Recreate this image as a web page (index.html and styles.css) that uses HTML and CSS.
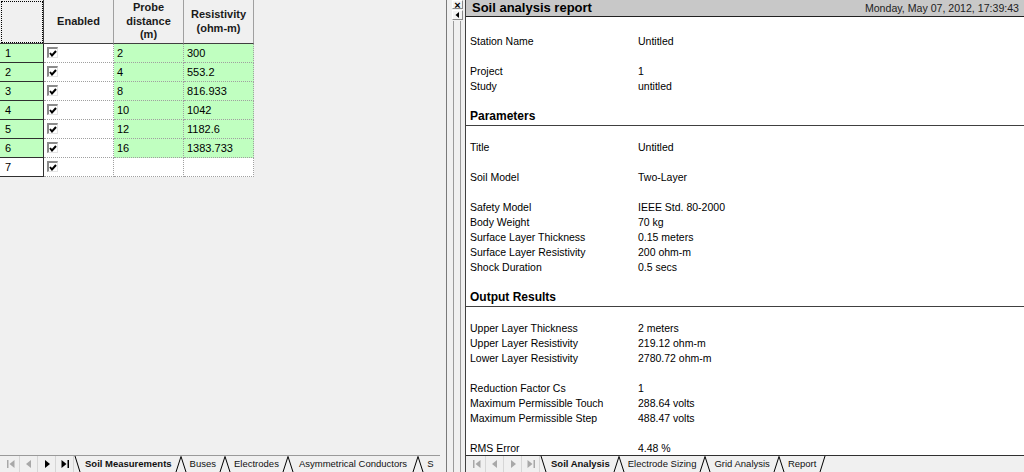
FILE: index.html
```html
<!DOCTYPE html>
<html>
<head>
<meta charset="utf-8">
<link rel="stylesheet" href="styles.css">
</head>
<body>
<div class="app">
  <section class="left">
    <div class="grid-area">
      <div class="grid">
        <div class="hd corner"></div>
        <div class="hd">Enabled</div>
        <div class="hd">Probe<br>distance<br>(m)</div>
        <div class="hd">Resistivity<br>(ohm-m)</div>

        <div class="rh">1</div><div class="en"><span class="cb"><svg width="8" height="7" viewBox="0 0 8 7"><path d="M1 3 L3 5.5 L7 1" fill="none" stroke="#000" stroke-width="2"/></svg></span></div><div class="dc">2</div><div class="dc">300</div>
        <div class="rh">2</div><div class="en"><span class="cb"><svg width="8" height="7" viewBox="0 0 8 7"><path d="M1 3 L3 5.5 L7 1" fill="none" stroke="#000" stroke-width="2"/></svg></span></div><div class="dc">4</div><div class="dc">553.2</div>
        <div class="rh">3</div><div class="en"><span class="cb"><svg width="8" height="7" viewBox="0 0 8 7"><path d="M1 3 L3 5.5 L7 1" fill="none" stroke="#000" stroke-width="2"/></svg></span></div><div class="dc">8</div><div class="dc">816.933</div>
        <div class="rh">4</div><div class="en"><span class="cb"><svg width="8" height="7" viewBox="0 0 8 7"><path d="M1 3 L3 5.5 L7 1" fill="none" stroke="#000" stroke-width="2"/></svg></span></div><div class="dc">10</div><div class="dc">1042</div>
        <div class="rh">5</div><div class="en"><span class="cb"><svg width="8" height="7" viewBox="0 0 8 7"><path d="M1 3 L3 5.5 L7 1" fill="none" stroke="#000" stroke-width="2"/></svg></span></div><div class="dc">12</div><div class="dc">1182.6</div>
        <div class="rh">6</div><div class="en"><span class="cb"><svg width="8" height="7" viewBox="0 0 8 7"><path d="M1 3 L3 5.5 L7 1" fill="none" stroke="#000" stroke-width="2"/></svg></span></div><div class="dc">16</div><div class="dc">1383.733</div>
        <div class="rh blank">7</div><div class="en"><span class="cb"><svg width="8" height="7" viewBox="0 0 8 7"><path d="M1 3 L3 5.5 L7 1" fill="none" stroke="#000" stroke-width="2"/></svg></span></div><div class="dc blank"></div><div class="dc blank"></div>
      </div>
    </div>
    <div class="tabstrip ts-left">
      <div class="nav">
        <span class="nb"><svg width="10" height="10" viewBox="0 0 10 10"><rect x="1" y="1" width="1.5" height="8" fill="#a8a8a8"/><path d="M8.5 1 L8.5 9 L3.5 5 Z" fill="#a8a8a8"/></svg></span>
        <span class="nb"><svg width="10" height="10" viewBox="0 0 10 10"><path d="M7 1 L7 9 L2 5 Z" fill="#a8a8a8"/></svg></span>
        <span class="nb"><svg width="10" height="10" viewBox="0 0 10 10"><path d="M3 1 L3 9 L8 5 Z" fill="#000"/></svg></span>
        <span class="nb"><svg width="10" height="10" viewBox="0 0 10 10"><path d="M1.5 1 L1.5 9 L6.5 5 Z" fill="#000"/><rect x="7.5" y="1" width="1.5" height="8" fill="#000"/></svg></span>
      </div>
      <div class="tabs">
        <svg class="sep" width="8" height="16" viewBox="0 0 8 16"><path d="M1 0 L6 16" fill="none" stroke="#000"/></svg>
        <span class="tab active">Soil Measurements</span>
        <svg class="sep" width="12" height="16" viewBox="0 0 12 16"><path d="M1 16 L6 0.5 L11 16" fill="none" stroke="#000"/></svg>
        <span class="tab">Buses</span>
        <svg class="sep" width="12" height="16" viewBox="0 0 12 16"><path d="M1 16 L6 0.5 L11 16" fill="none" stroke="#000"/></svg>
        <span class="tab">Electrodes</span>
        <svg class="sep" width="12" height="16" viewBox="0 0 12 16"><path d="M1 16 L6 0.5 L11 16" fill="none" stroke="#000"/></svg>
        <span class="tab tab-wide">Asymmetrical Conductors</span>
        <svg class="sep" width="12" height="16" viewBox="0 0 12 16"><path d="M1 16 L6 0.5 L11 16" fill="none" stroke="#000"/></svg>
        <span class="tab">S</span>
      </div>
    </div>
  </section>

  <div class="splitter">
    <div class="sp-gap"></div>
    <div class="sp-bar">
      <div class="sp-btn sp-x">×</div>
      <div class="sp-btn"><svg width="5" height="6" viewBox="0 0 5 6"><path d="M4 0 L4 6 L0.5 3 Z" fill="#000"/></svg></div>
      <div class="sp-lines"></div>
    </div>
  </div>

  <section class="right">
    <header class="rp-head">
      <span class="rp-title">Soil analysis report</span>
      <span class="rp-date">Monday, May 07, 2012, 17:39:43</span>
    </header>
    <div class="rp-body">
      <div class="r"><span class="k">Station Name</span><span>Untitled</span></div>
      <div class="gap"></div>
      <div class="r"><span class="k">Project</span><span>1</span></div>
      <div class="r"><span class="k">Study</span><span>untitled</span></div>
      <div class="h">Parameters</div>
      <div class="r"><span class="k">Title</span><span>Untitled</span></div>
      <div class="gap"></div>
      <div class="r"><span class="k">Soil Model</span><span>Two-Layer</span></div>
      <div class="gap"></div>
      <div class="r"><span class="k">Safety Model</span><span>IEEE Std. 80-2000</span></div>
      <div class="r"><span class="k">Body Weight</span><span>70 kg</span></div>
      <div class="r"><span class="k">Surface Layer Thickness</span><span>0.15 meters</span></div>
      <div class="r"><span class="k">Surface Layer Resistivity</span><span>200 ohm-m</span></div>
      <div class="r"><span class="k">Shock Duration</span><span>0.5 secs</span></div>
      <div class="h">Output Results</div>
      <div class="r"><span class="k">Upper Layer Thickness</span><span>2 meters</span></div>
      <div class="r"><span class="k">Upper Layer Resistivity</span><span>219.12 ohm-m</span></div>
      <div class="r"><span class="k">Lower Layer Resistivity</span><span>2780.72 ohm-m</span></div>
      <div class="gap"></div>
      <div class="r"><span class="k">Reduction Factor Cs</span><span>1</span></div>
      <div class="r"><span class="k">Maximum Permissible Touch</span><span>288.64 volts</span></div>
      <div class="r"><span class="k">Maximum Permissible Step</span><span>488.47 volts</span></div>
      <div class="gap"></div>
      <div class="r"><span class="k">RMS Error</span><span>4.48 %</span></div>
    </div>
    <div class="tabstrip ts-right">
      <div class="nav">
        <span class="nb"><svg width="10" height="10" viewBox="0 0 10 10"><rect x="1" y="1" width="1.5" height="8" fill="#a8a8a8"/><path d="M8.5 1 L8.5 9 L3.5 5 Z" fill="#a8a8a8"/></svg></span>
        <span class="nb"><svg width="10" height="10" viewBox="0 0 10 10"><path d="M7 1 L7 9 L2 5 Z" fill="#a8a8a8"/></svg></span>
        <span class="nb"><svg width="10" height="10" viewBox="0 0 10 10"><path d="M3 1 L3 9 L8 5 Z" fill="#a8a8a8"/></svg></span>
        <span class="nb"><svg width="10" height="10" viewBox="0 0 10 10"><path d="M1.5 1 L1.5 9 L6.5 5 Z" fill="#a8a8a8"/><rect x="7.5" y="1" width="1.5" height="8" fill="#a8a8a8"/></svg></span>
      </div>
      <div class="tabs">
        <svg class="sep" width="8" height="16" viewBox="0 0 8 16"><path d="M1 0 L6 16" fill="none" stroke="#000"/></svg>
        <span class="tab active">Soil Analysis</span>
        <svg class="sep" width="12" height="16" viewBox="0 0 12 16"><path d="M1 16 L6 0.5 L11 16" fill="none" stroke="#000"/></svg>
        <span class="tab">Electrode Sizing</span>
        <svg class="sep" width="12" height="16" viewBox="0 0 12 16"><path d="M1 16 L6 0.5 L11 16" fill="none" stroke="#000"/></svg>
        <span class="tab">Grid Analysis</span>
        <svg class="sep" width="12" height="16" viewBox="0 0 12 16"><path d="M1 16 L6 0.5 L11 16" fill="none" stroke="#000"/></svg>
        <span class="tab">Report</span>
        <svg class="sep" width="8" height="16" viewBox="0 0 8 16"><path d="M1 16 L6 0" fill="none" stroke="#000"/></svg>
      </div>
    </div>
  </section>
</div>
</body>
</html>
```

FILE: styles.css
```css
* { box-sizing: border-box; }
html, body { margin: 0; padding: 0; }
body {
  width: 1024px;
  height: 472px;
  overflow: hidden;
  background: #f0f0f0;
  color: #000;
  font-family: "Liberation Sans", Arial, sans-serif;
}
.app { display: flex; height: 472px; }

/* ---------- left pane ---------- */
.left {
  width: 440px;
  display: flex;
  flex-direction: column;
  background: #f0f0f0;
}
.grid-area { flex: 1; overflow: hidden; }
.grid {
  display: grid;
  grid-template-columns: 44px 70px 70px 70px;
  grid-template-rows: 44px repeat(7, 19px);
  width: 254px;
  font-size: 11px;
}
.hd {
  background: #f0f0f0;
  border-right: 1px solid #a0a0a0;
  border-bottom: 1px solid #404040;
  display: flex;
  align-items: center;
  justify-content: center;
  text-align: center;
  font-weight: bold;
  line-height: 13.5px;
  color: #1a1a1a;
}
.hd.corner {
  border-right-color: #404040;
  outline: 1px dotted #000;
  outline-offset: -2px;
}
.rh {
  background: #c0ffc0;
  border-right: 1px solid #303030;
  border-bottom: 1px solid #303030;
  padding-left: 5px;
  line-height: 18px;
}
.en {
  background: #fff;
  border-right: 1px dotted #a0a0a0;
  border-bottom: 1px dotted #a0a0a0;
}
.dc {
  background: #c0ffc0;
  border-right: 1px dotted #a0a0a0;
  border-bottom: 1px dotted #a0a0a0;
  padding-left: 3px;
  line-height: 18px;
}
.rh.blank, .dc.blank { background: #fff; }
.cb {
  display: flex;
  align-items: center;
  justify-content: center;
  width: 11px;
  height: 11px;
  margin: 3px 0 0 3px;
  background: #fff;
  border-left: 2px solid #8a8a8a;
  border-top: 2px solid #8a8a8a;
  border-right: 1px solid #e4e4e4;
  border-bottom: 1px solid #e4e4e4;
}

/* ---------- tab strips ---------- */
.tabstrip {
  height: 17px;
  display: flex;
  align-items: stretch;
  background: #f0f0f0;
  overflow: hidden;
  white-space: nowrap;
}
.ts-left { border-top: 1px solid #9a9a9a; }
.ts-right { border-top: 1px solid #303030; }
.nav {
  display: flex;
  width: 74px;
  flex: none;
  padding-left: 2px;
}
.nb {
  width: 18px;
  display: flex;
  align-items: center;
  justify-content: center;
  border-right: 1px solid #d6d6d6;
}
.tabs {
  display: flex;
  align-items: stretch;
  font-size: 9.5px;
  line-height: 16px;
  color: #111;
}
.sep { flex: none; display: block; }
.tab { padding: 0 3px; }
.tab-wide { padding: 0 5px; }
.tab.active { font-weight: bold; }

/* ---------- splitter ---------- */
.splitter {
  width: 25px;
  display: flex;
  background: #f0f0f0;
}
.sp-gap { width: 6px; }
.sp-bar {
  flex: 1;
  display: flex;
  flex-direction: column;
  border-left: 1px solid #7a7a7a;
}
.sp-btn {
  width: 11px;
  height: 10px;
  margin: 0 0 1px 5px;
  display: flex;
  align-items: center;
  justify-content: center;
  background: #f4f4f4;
  border: 1px solid #fff;
  border-right-color: #8a8a8a;
  border-bottom-color: #8a8a8a;
  font-size: 11px;
  line-height: 8px;
  font-weight: bold;
}
.sp-x { height: 9px; }
.sp-lines {
  flex: 1;
  width: 8px;
  margin-left: 6px;
  border-left: 1px solid #9a9a9a;
  border-right: 1px solid #9a9a9a;
}

/* ---------- right pane ---------- */
.right {
  flex: 1;
  display: flex;
  flex-direction: column;
  border-left: 1px solid #404040;
  min-width: 0;
}
.rp-head {
  height: 17px;
  flex: none;
  background: #c8c8c8;
  border-bottom: 1px solid #202020;
  display: flex;
  justify-content: space-between;
  align-items: center;
  padding: 0 5px 0 6px;
}
.rp-title {
  font-weight: bold;
  font-size: 13px;
  line-height: 16px;
}
.rp-date {
  font-size: 10.6px;
  color: #222;
}
.rp-body {
  flex: 1;
  background: #fff;
  display: flex;
  flex-direction: column;
  padding-top: 17px;
  font-size: 10.5px;
  overflow: hidden;
}
.r {
  display: flex;
  height: 15px;
  line-height: 15px;
  padding-left: 4px;
  flex: none;
}
.k { width: 168px; flex: none; }
.gap { height: 15px; flex: none; }
.h {
  flex: none;
  margin: 15px 0 14px;
  padding: 0 0 1px 4px;
  font-size: 12px;
  font-weight: bold;
  line-height: 15px;
  border-bottom: 1px solid #404040;
}
```
